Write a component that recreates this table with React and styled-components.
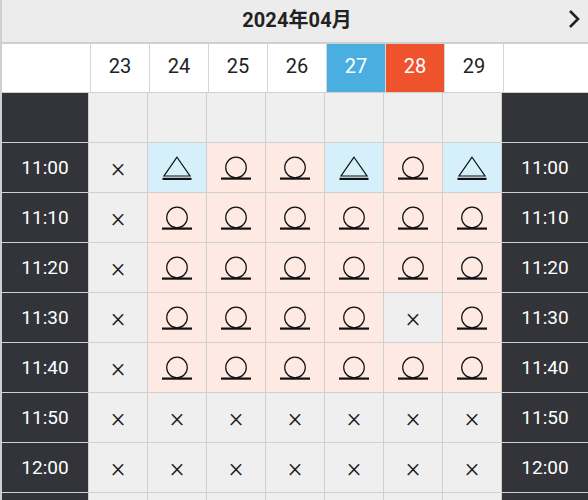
import React from 'react';
import styled, { createGlobalStyle } from 'styled-components';

const GlobalStyle = createGlobalStyle`
  html, body {
    margin: 0;
    padding: 0;
    background: #fff;
    font-family: Roboto, "Noto Sans CJK JP", sans-serif;
    overflow: hidden;
  }
`

const DAYS = [
  { day: 23 },
  { day: 24 },
  { day: 25 },
  { day: 26 },
  { day: 27, tone: 'sat' },
  { day: 28, tone: 'sun' },
  { day: 29 },
]

// o = available, t = few left, x = full
const ROWS = [
  { time: '', slots: [null, null, null, null, null, null, null] },
  { time: '11:00', slots: ['x', 't', 'o', 'o', 't', 'o', 't'] },
  { time: '11:10', slots: ['x', 'o', 'o', 'o', 'o', 'o', 'o'] },
  { time: '11:20', slots: ['x', 'o', 'o', 'o', 'o', 'o', 'o'] },
  { time: '11:30', slots: ['x', 'o', 'o', 'o', 'o', 'x', 'o'] },
  { time: '11:40', slots: ['x', 'o', 'o', 'o', 'o', 'o', 'o'] },
  { time: '11:50', slots: ['x', 'x', 'x', 'x', 'x', 'x', 'x'] },
  { time: '12:00', slots: ['x', 'x', 'x', 'x', 'x', 'x', 'x'] },
  // next row only peeks in at the bottom edge
  { time: '', slots: ['-', '-', '-', '-', '-', '-', '-'] },
]

const Calendar = styled.div`
  width: 586px;
  height: 500px;
  border-left: 2px solid #cfcfcf;
  display: flex;
  flex-direction: column;
  overflow: hidden;
`
const TitleBar = styled.div`
  height: 44px;
  flex: none;
  box-sizing: border-box;
  padding-bottom: 6px;
  background: #ececec;
  border-bottom: 2px solid #cfcfcf;
  display: flex;
  align-items: center;
  justify-content: center;
  position: relative;
`
const Title = styled.h1`
  margin: 0;
  font-size: 20px;
  font-weight: 700;
  color: #222;
  letter-spacing: 0.1px;
  transform: translateX(2px);
`
const NextButton = styled.button`
  position: absolute;
  right: 4px;
  top: 8px;
  width: 20px;
  height: 22px;
  padding: 0;
  border: 0;
  background: none;
  display: flex;
  align-items: center;
  justify-content: center;
`
const DateRow = styled.div`
  flex: none;
  display: grid;
  grid-template-columns: 88px repeat(7, 58px) 1fr;
  column-gap: 1px;
  background: #d6d6d6;
  border-bottom: 1px solid #d0d0d0;
`
const DateCell = styled.div`
  height: 48px;
  box-sizing: border-box;
  padding-bottom: 5px;
  display: flex;
  align-items: center;
  justify-content: center;
  font-size: 20px;
  background: ${p => p.tone === 'sat' ? '#4aaee0' : p.tone === 'sun' ? '#ef532d' : '#fff'};
  color: ${p => p.tone ? '#fff' : '#222'};
`
const Body = styled.div`
  display: grid;
  grid-template-columns: 86px repeat(7, 58px) 1fr;
  grid-auto-rows: 49px;
  gap: 1px;
  background: #d0d0d0;
`
const TimeCell = styled.div`
  background: #333439;
  color: #fff;
  font-size: 19px;
  display: flex;
  align-items: center;
  justify-content: center;
`
const SlotCell = styled.div`
  display: flex;
  align-items: center;
  justify-content: center;
  color: #222;
  background: ${p => p.kind === 'o' ? '#fee9e3' : p.kind === 't' ? '#d5f0fb' : '#efefef'};
`
const Cross = styled.span`
  font-size: 27px;
  font-weight: 300;
  line-height: 1;
  color: #1a1a1a;
  transform: translateY(1px);
`

const Chevron = () => (
  <svg width="14" height="20" viewBox="0 0 14 20">
    <polyline points="3,2 11,10 3,18" fill="none" stroke="#222" strokeWidth="2.6" strokeLinejoin="miter" />
  </svg>
)

const Circle = () => (
  <svg width="30" height="24" viewBox="0 0 30 24">
    <circle cx="15" cy="11.5" r="10.3" fill="none" stroke="#111" strokeWidth="1.2" />
    <rect x="0" y="21.5" width="30" height="2.2" fill="#111" />
  </svg>
)

const Triangle = () => (
  <svg width="30" height="24" viewBox="0 0 30 24">
    <polygon points="15,1.2 2,20 28,20" fill="none" stroke="#111" strokeWidth="1.2" strokeLinejoin="miter" />
    <rect x="0.5" y="21.8" width="29" height="2.2" fill="#111" />
  </svg>
)

const Slot = ({ kind }) => {
  if (kind === 'o') return <Circle />
  if (kind === 't') return <Triangle />
  if (kind === 'x') return <Cross>×</Cross>
  return null
}

export default function App() {
  return (
    <>
      <GlobalStyle />
      <Calendar>
        <TitleBar>
          <Title>2024年04月</Title>
          <NextButton aria-label="next"><Chevron /></NextButton>
        </TitleBar>
        <DateRow>
          <DateCell />
          {DAYS.map(d => <DateCell key={d.day} tone={d.tone}>{d.day}</DateCell>)}
          <DateCell />
        </DateRow>
        <Body>
          {ROWS.map((row, i) => (
            <React.Fragment key={i}>
              <TimeCell>{row.time}</TimeCell>
              {row.slots.map((s, j) => (
                <SlotCell key={j} kind={s}><Slot kind={s} /></SlotCell>
              ))}
              <TimeCell>{row.time}</TimeCell>
            </React.Fragment>
          ))}
        </Body>
      </Calendar>
    </>
  );
}
